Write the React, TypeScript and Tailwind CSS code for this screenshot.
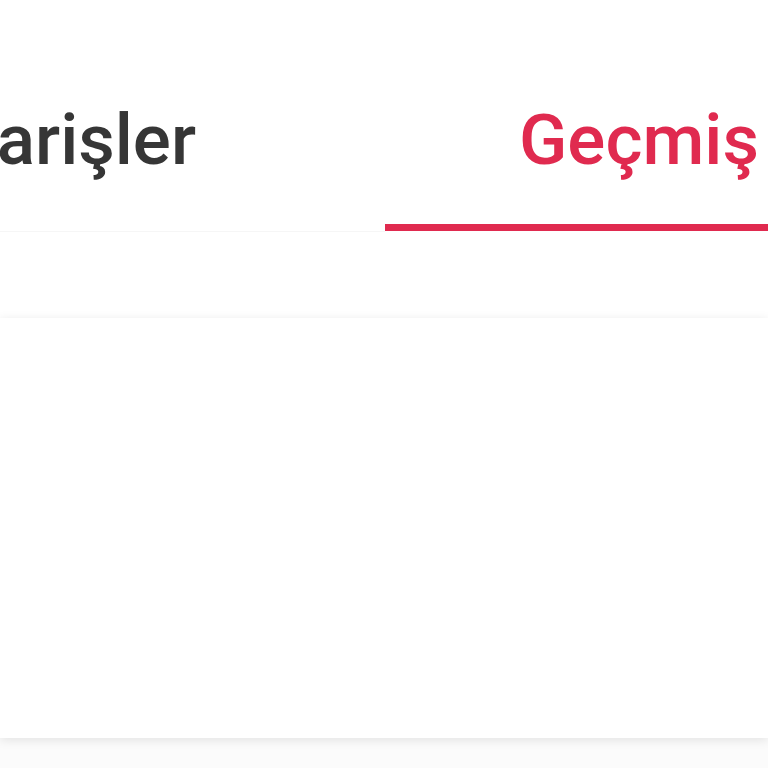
import React from "react";

const tabs = [
  { label: "Siparişler", active: false },
  { label: "Geçmiş", active: true },
];

function TabBar() {
  return (
    <div className="flex h-[232px] w-full overflow-hidden bg-white">
      {/* left tab: text overflows past the screen edge */}
      <div className="flex h-full w-[385px] shrink-0 flex-col">
        <div className="flex flex-1 items-start justify-end pr-[189px] pt-[104px]">
          <span className="whitespace-nowrap text-[71px] font-medium leading-none text-[#363636]">
            {tabs[0].label}
          </span>
        </div>
        <div className="h-px bg-[#f6f6f6]" />
      </div>
      <div className="flex h-full flex-1 flex-col">
        <div className="flex flex-1 items-start pl-[134px] pt-[104px]">
          <span className="whitespace-nowrap text-[71px] font-medium leading-none text-[#e02a4f]">
            {tabs[1].label}
          </span>
        </div>
        <div className="mb-px h-[7px] bg-[#e02a4f]" />
      </div>
    </div>
  );
}

export default function App() {
  return (
    <div
      className="flex h-[768px] w-[768px] flex-col overflow-hidden bg-[#fbfbfb]"
      style={{ fontFamily: "Roboto, 'Noto Sans', sans-serif" }}
    >
      <TabBar />
      <div className="h-[86px] bg-white" />
      {/* empty history card */}
      <div className="h-[420px] bg-white shadow-[0_2px_10px_rgba(0,0,0,0.1)]" />
    </div>
  );
}
